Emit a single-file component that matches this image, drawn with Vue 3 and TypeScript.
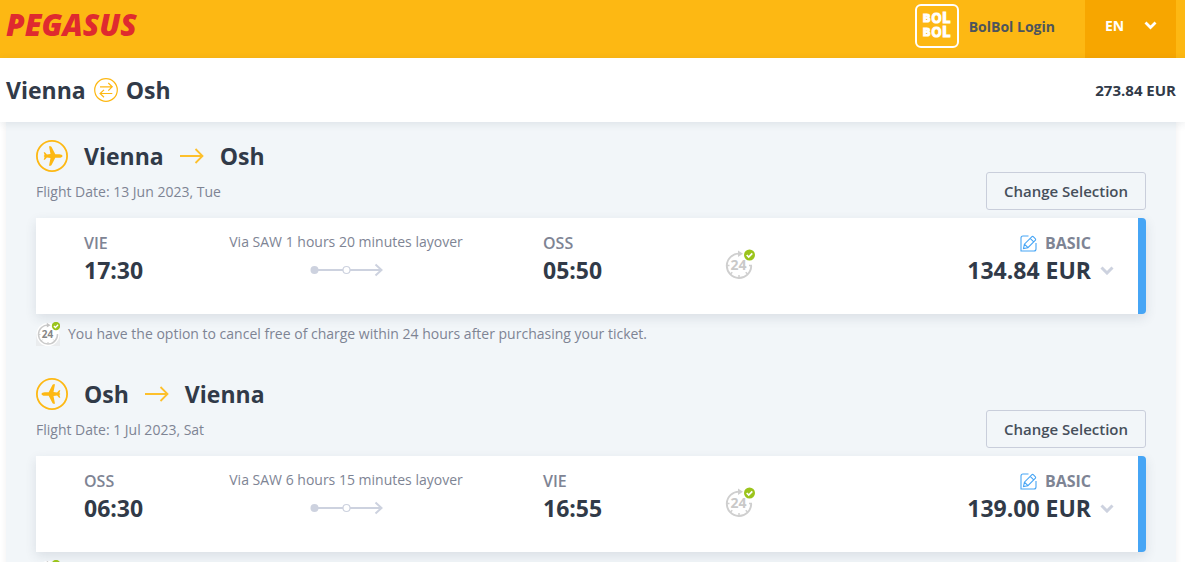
<script setup lang="ts">
interface Flight {
  from: string
  to: string
  date: string
  depCode: string
  depTime: string
  via: string
  arrCode: string
  arrTime: string
  price: string
  inbound: boolean
}

const flights: Flight[] = [
  {
    from: 'Vienna', to: 'Osh', date: '13 Jun 2023, Tue',
    depCode: 'VIE', depTime: '17:30', via: 'Via SAW 1 hours 20 minutes layover',
    arrCode: 'OSS', arrTime: '05:50', price: '134.84 EUR', inbound: false,
  },
  {
    from: 'Osh', to: 'Vienna', date: '1 Jul 2023, Sat',
    depCode: 'OSS', depTime: '06:30', via: 'Via SAW 6 hours 15 minutes layover',
    arrCode: 'VIE', arrTime: '16:55', price: '139.00 EUR', inbound: true,
  },
]
</script>

<template>
  <div class="page">
    <header class="topbar">
      <a class="logo" href="#">PEGASUS</a>
      <div class="topbar-right">
        <a class="login" href="#">
          <span class="bolbol" aria-hidden="true">
            <span class="bol">B<b>O</b><i>L</i></span>
            <span class="bol">B<b>O</b><i>L</i></span>
          </span>
          BolBol Login
        </a>
        <button class="lang" type="button">
          EN
          <svg width="13" height="9" viewBox="0 0 13 9"><path d="M1.500 1.500l5 5 5-5" fill="none" stroke="#fff" stroke-width="2.800" /></svg>
        </button>
      </div>
    </header>

    <div class="summary">
      <h1>
        Vienna
        <svg width="24" height="24" viewBox="0 0 24 24" fill="none" stroke="#fdb813" stroke-width="1.200">
          <circle cx="12" cy="12" r="11.300" />
          <path d="M6 8.800h12M14.300 5l3.900 3.800-3.900 3.800M18.300 15.500H6.200M10 11.900l-3.900 3.600 3.900 3.800" />
        </svg>
        Osh
      </h1>
      <strong class="total">273.84 EUR</strong>
    </div>

    <main class="panel">
      <section v-for="f in flights" :key="f.depCode" class="flight">
        <div class="flight-head">
          <div>
            <h2>
              <svg class="plane" width="32" height="32" viewBox="0 0 32 32">
                <circle cx="16" cy="16" r="15.100" fill="none" stroke="#fdb813" stroke-width="1.800" />
                <path
                  :transform="f.inbound ? 'rotate(180 16 16)' : undefined"
                  d="M26.500 16c0-1-1.600-1.800-3.200-1.800h-4L15.700 7.300c-.4-.7-.8-1-1.600-1H13l1.500 7.800-3.600.3-2-2.200H7.700L8.600 15l-.9 1 .9 1-.9 2.800h1.200l2-2.200 3.600.3L13 25.700h1.100c.8 0 1.200-.3 1.600-1l3.600-6.900h4c1.600 0 3.200-.8 3.200-1.800z"
                  fill="#fdb813"
                />
              </svg>
              <span>{{ f.from }}</span>
              <svg class="to" width="24" height="16" viewBox="0 0 24 16" fill="none" stroke="#fdc02c" stroke-width="1.800">
                <path d="M0 8h22.500M15.500 1l7 7-7 7" />
              </svg>
              <span>{{ f.to }}</span>
            </h2>
            <p class="date">Flight Date: {{ f.date }}</p>
          </div>
          <button class="change" type="button">Change Selection</button>
        </div>

        <div class="card">
          <div>
            <div class="code">{{ f.depCode }}</div>
            <div class="time">{{ f.depTime }}</div>
          </div>
          <div class="via">
            <div class="via-text">{{ f.via }}</div>
            <svg width="73" height="14" viewBox="0 0 73 14" fill="none" stroke="#cdd2df">
              <path d="M4 7h68" stroke-width="2" />
              <path d="m65.500 1.500 6 5.500-6 5.500" stroke-width="2" />
              <circle cx="4.500" cy="7" r="4" fill="#cdd2df" stroke="none" />
              <circle cx="36.500" cy="7" r="3.500" fill="#fff" stroke-width="1.200" />
            </svg>
          </div>
          <div class="arrival">
            <div class="code">{{ f.arrCode }}</div>
            <div class="time">{{ f.arrTime }}</div>
          </div>
          <div class="refund">
            <svg width="32" height="32" viewBox="0 0 32 32" role="img" aria-label="24 hours">
              <path d="M14.500 4.600A12.200 12.200 0 1 0 26.200 17" fill="none" stroke="#cfcfcf" stroke-width="1.900" />
              <path d="m13 1.500 5 3.200-5 3.200z" fill="#cfcfcf" />
              <path d="M2 16.500h2.500M5.500 25l1.800-1.800M14 28.500V26M22.500 25l-1.800-1.800M24 16.500h3" stroke="#cfcfcf" stroke-width="1.500" />
              <text x="13.500" y="21" text-anchor="middle" fill="#c9c9c9" class="num">24</text>
              <circle cx="24.500" cy="6" r="5.500" fill="#9bc41c" />
              <path d="m21.700 6 2 2 3.600-3.600" fill="none" stroke="#fff" stroke-width="1.700" />
            </svg>
          </div>
          <div class="fare">
            <div>
              <div class="class">
                <svg width="17" height="17" viewBox="0 0 17 17" fill="none" stroke="#46a5f5" stroke-width="1.100">
                  <path d="M8.500 1H3Q1 1 1 3v13h13q2 0 2-2V8" />
                  <path d="M3.500 13.500l.9-4.300L11.700 1.900q.9-.9 1.800 0l1.700 1.700q.9.900 0 1.800L7.900 12.700zM4.400 9.200l3.500 3.500M10.200 3.400l3.500 3.500" />
                </svg>
                BASIC
              </div>
              <div class="price">{{ f.price }}</div>
            </div>
            <button class="expand" type="button" aria-label="Show details">
              <svg width="14" height="9" viewBox="0 0 14 9"><path d="M1.500 1.500 7 7l5.500-5.500" fill="none" stroke="#cdd2df" stroke-width="3" /></svg>
            </button>
          </div>
        </div>

        <p class="note">
          <svg width="24" height="24" viewBox="0 0 24 24">
            <path d="M0 12h24v12H0z" fill="#eaecee" />
            <circle cx="12" cy="12.500" r="11.500" fill="#fff" />
            <path d="M12.500 3A9.500 9.500 0 1 0 21.500 12" fill="none" stroke="#cbcbcb" stroke-width="1.500" />
            <path d="m10.800.8 3.800 2.400-3.800 2.400z" fill="#c4c4c4" />
            <path d="M2.500 12.500h2M5.200 19l1.400-1.400M12 22v-2M18.800 19l-1.400-1.400" stroke="#cbcbcb" />
            <text x="11.500" y="16" text-anchor="middle" fill="#858585" class="num small">24</text>
            <circle cx="20" cy="4" r="4.200" fill="#9bc41c" />
            <path d="m17.900 4 1.500 1.500 2.700-2.700" fill="none" stroke="#fff" stroke-width="1.300" />
          </svg>
          You have the option to cancel free of charge within 24 hours after purchasing your ticket.
        </p>
      </section>
    </main>
  </div>
</template>

<style>
body {
  background: #fff;
}
</style>

<style scoped>
.page {
  height: 100vh;
  overflow: hidden;
  font-family: "Open Sans", "Noto Sans", sans-serif;
  color: #313a48;
}
.page * {
  box-sizing: border-box;
}
svg {
  display: block;
  flex: none;
}
h1, h2, p {
  margin: 0;
}
button {
  font: inherit;
  cursor: pointer;
}
.topbar {
  height: 58px;
  padding: 0 9px 0 6px;
  background: #fdb813;
  display: flex;
  justify-content: space-between;
}
.logo {
  margin-top: 7px;
  font: italic 800 30px/36px "Open Sans", sans-serif;
  color: #df2a2f;
  text-decoration: none;
}
.topbar-right {
  display: flex;
}
.login {
  display: flex;
  align-items: center;
  gap: 10px;
  height: 52px;
  margin-right: 30px;
  font-size: 14px;
  font-weight: 700;
  color: #4d545c;
  text-decoration: none;
}
.bolbol {
  width: 44px;
  height: 44px;
  padding-bottom: 2px;
  border: 2px solid #fff;
  border-radius: 6px;
  display: flex;
  flex-direction: column;
  align-items: center;
  justify-content: center;
  font: 800 11px/14px Inter, sans-serif;
  color: #fff;
  -webkit-text-stroke: 1px #fff;
}
.bol {
  height: 14px;
  display: flex;
  align-items: center;
  gap: 1px;
}
.bolbol b {
  font-size: 13px;
  font-weight: 700;
}
.bolbol i {
  font-size: 14px;
  font-style: normal;
}
.lang {
  width: 91px;
  padding: 0 19px 8px 20px;
  border: 0;
  background: #f7a600;
  color: #fff;
  font-size: 14px;
  font-weight: 700;
  display: flex;
  align-items: center;
  justify-content: space-between;
}
.summary {
  position: relative;
  height: 64px;
  padding: 0 9px 0 6px;
  background: #fff;
  box-shadow: 0 2px 8px rgba(40, 60, 80, 0.1);
  display: flex;
  align-items: center;
  justify-content: space-between;
}
h1, h2 {
  display: flex;
  align-items: center;
  font-size: 23px;
  line-height: 32px;
  font-weight: 700;
}
h1 {
  gap: 8px;
}
.total {
  font-size: 15px;
  font-weight: 700;
}
.panel {
  margin: 0 9px 0 6px;
  padding: 18px 30px;
  background: #f2f6f9;
  box-shadow: 0 0 6px rgba(60, 50, 50, 0.08);
}
.flight {
  margin-bottom: 32px;
}
.flight-head {
  height: 78px;
  display: flex;
  justify-content: space-between;
}
.plane {
  margin-right: 16px;
}
.to {
  margin: 0 16px;
}
.date {
  margin-top: 10px;
  font-size: 14px;
  line-height: 20px;
  color: #7e8494;
}
.change {
  align-self: flex-end;
  width: 160px;
  height: 38px;
  margin-bottom: 8px;
  padding: 0;
  border: 1px solid #c9cedb;
  border-radius: 3px;
  background: transparent;
  color: #464f5b;
  font-size: 15px;
  font-weight: 600;
}
.card {
  height: 96px;
  padding: 14px 24px 0 48px;
  background: #fff;
  border-right: 8px solid #46a5f5;
  border-radius: 0 4px 4px 0;
  box-shadow: 0 4px 12px rgba(40, 60, 80, 0.12);
  display: grid;
  grid-template-columns: 145fr 234fr 262fr 50fr 339fr;
}
.code, .class {
  font-size: 16px;
  line-height: 22px;
  font-weight: 600;
  color: #7e8494;
}
.time, .price {
  font-size: 23px;
  line-height: 32px;
  font-weight: 700;
}
.via {
  display: flex;
  flex-direction: column;
  align-items: center;
  gap: 11px;
}
.via-text {
  font-size: 14px;
  line-height: 20px;
  white-space: nowrap;
  color: #7e8494;
}
.arrival {
  padding-left: 80px;
}
.refund {
  padding-top: 17px;
}
.num {
  font: 700 14px "Open Sans", sans-serif;
}
.num.small {
  font-size: 10px;
}
.fare {
  display: flex;
  justify-content: flex-end;
  gap: 9px;
}
.class {
  display: flex;
  align-items: center;
  justify-content: flex-end;
  gap: 8px;
  font-weight: 700;
}
.expand {
  height: 9px;
  margin-top: 34px;
  padding: 0;
  border: 0;
  background: none;
}
.note {
  margin-top: 8px;
  display: flex;
  align-items: center;
  gap: 8px;
  font-size: 14px;
  line-height: 24px;
  color: #7e8494;
}
</style>
